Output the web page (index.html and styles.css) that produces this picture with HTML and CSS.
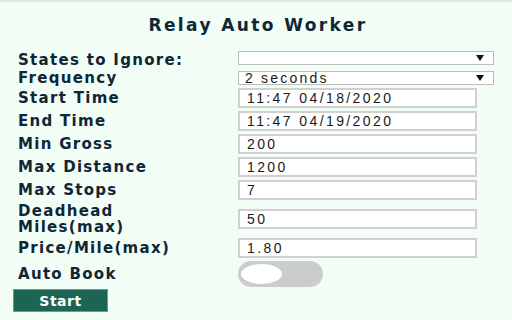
FILE: index.html
```html
<!DOCTYPE html>
<html lang="en">
<head>
  <meta charset="UTF-8">
  <title>Relay Auto Worker</title>
  <link rel="stylesheet" href="styles.css">
</head>
<body>

<h1>Relay Auto Worker</h1>

<form class="settings">
  <label class="lbl" for="states">States to Ignore:</label>
  <div class="select-wrap first">
    <select id="states"><option></option></select>
  </div>

  <label class="lbl" for="freq">Frequency</label>
  <div class="select-wrap">
    <select id="freq"><option>2 seconds</option></select>
  </div>

  <label class="lbl" for="start">Start Time</label>
  <input class="field" id="start" type="text" value="11:47 04/18/2020">

  <label class="lbl" for="end">End Time</label>
  <input class="field" id="end" type="text" value="11:47 04/19/2020">

  <label class="lbl" for="gross">Min Gross</label>
  <input class="field" id="gross" type="text" value="200">

  <label class="lbl" for="dist">Max Distance</label>
  <input class="field" id="dist" type="text" value="1200">

  <label class="lbl" for="stops">Max Stops</label>
  <input class="field" id="stops" type="text" value="7">

  <label class="lbl two-line" for="dead">Deadhead<br>Miles(max)</label>
  <input class="field" id="dead" type="text" value="50">

  <label class="lbl" for="price">Price/Mile(max)</label>
  <input class="field" id="price" type="text" value="1.80">

  <label class="lbl" for="auto">Auto Book</label>
  <label class="switch">
    <input id="auto" type="checkbox">
    <span class="knob"></span>
  </label>
</form>

<button class="btn-start" type="button">Start</button>

</body>
</html>
```

FILE: styles.css
```css
* { box-sizing: border-box; margin: 0; padding: 0; }
body {
  background: #f2fdf6;
  border-top: 2px solid #e3e6e5;
  font-family: "DejaVu Sans", Verdana, sans-serif;
  color: #0f2636;
  height: 320px;
  overflow: hidden;
}
h1 {
  font-size: 17px;
  letter-spacing: 2.4px;
  text-align: center;
  padding-top: 13px;
  padding-left: 4px;
  height: 49px;
}
.settings {
  display: grid;
  grid-template-columns: 220px 256px;
  row-gap: 3px;
  align-items: center;
  padding-left: 18px;
}
.lbl {
  font-size: 15px;
  font-weight: bold;
  letter-spacing: 1.3px;
  line-height: 14px;
}
.two-line { line-height: 16px; }
.select-wrap {
  position: relative;
  height: 14px;
}
.select-wrap.first { margin-bottom: 3px; }
.select-wrap::after {
  content: "";
  position: absolute;
  right: 10px;
  top: 4px;
  border-left: 4px solid transparent;
  border-right: 4px solid transparent;
  border-top: 6px solid #111;
}
.select-wrap select {
  display: block;
  appearance: none;
  width: 100%;
  height: 14px;
  border: 1px solid #bdbdbd;
  background: #fff;
  font-family: "Liberation Sans", Arial, sans-serif;
  font-size: 14px;
  letter-spacing: 2.2px;
  line-height: 12px;
  padding: 0 6px;
  color: #1a1a1a;
}
.field {
  display: block;
  width: 239px;
  height: 20px;
  border: 2px solid #d0d0d0;
  background: #fff;
  font-family: "Liberation Sans", Arial, sans-serif;
  font-size: 14px;
  letter-spacing: 2.4px;
  padding: 0 7px;
  color: #1a1a1a;
}
.switch {
  position: relative;
  display: block;
  width: 85px;
  height: 26px;
  border-radius: 13px;
  background: #cccccc;
}
.switch input { display: none; }
.knob {
  position: absolute;
  left: 3px;
  top: 3px;
  width: 41px;
  height: 20px;
  border-radius: 50%;
  background: #fff;
}
.btn-start {
  display: block;
  margin: 2px 0 0 13px;
  width: 95px;
  height: 23px;
  background: #1c6453;
  border: 1px solid #6f9c90;
  color: #fff;
  font-family: "DejaVu Sans", Verdana, sans-serif;
  font-size: 14px;
  font-weight: bold;
  letter-spacing: 0.5px;
}
```
